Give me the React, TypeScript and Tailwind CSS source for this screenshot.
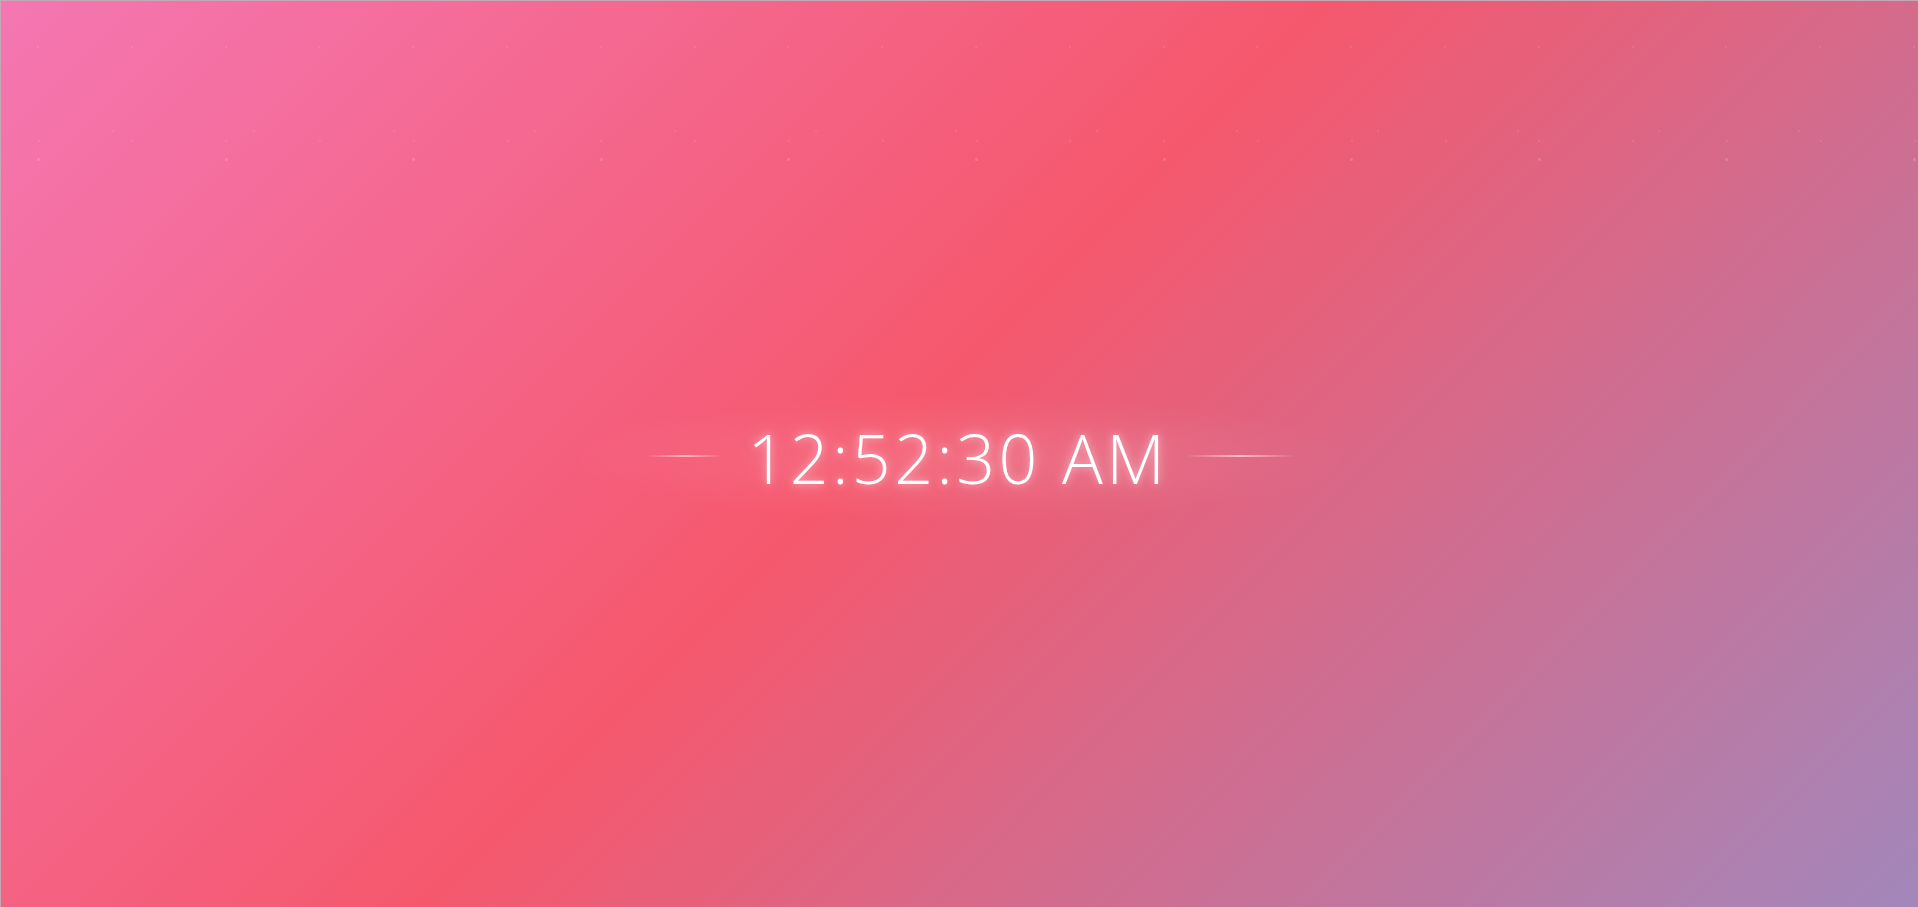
import React from "react";

type Row = { top: number; start: number; step: number; size: number; opacity: number };

const rows: Row[] = [
  { top: 46, start: 37, step: 93.8, size: 2, opacity: 0.12 },
  { top: 130, start: 112, step: 140.5, size: 2, opacity: 0.12 },
  { top: 140, start: 37.5, step: 93.8, size: 2, opacity: 0.13 },
  { top: 158, start: 37.5, step: 187.6, size: 3, opacity: 0.18 },
];

function Particles() {
  const dots: { left: number; top: number; size: number; opacity: number }[] = [];
  rows.forEach((r) => {
    for (let x = r.start; x < 1918; x += r.step) {
      dots.push({ left: x, top: r.top, size: r.size, opacity: r.opacity });
    }
  });
  return (
    <div className="pointer-events-none absolute inset-0">
      {dots.map((d, i) => (
        <span
          key={i}
          className="absolute rounded-full bg-white"
          style={{
            left: d.left - d.size / 2,
            top: d.top - d.size / 2,
            width: d.size,
            height: d.size,
            opacity: d.opacity,
          }}
        />
      ))}
    </div>
  );
}

export default function App() {
  return (
    <div className="relative h-[907px] w-full overflow-hidden border-t border-l border-[#c7a6b6] bg-[linear-gradient(135deg,#f477b2_0%,#f5586d_47%,#a287bb_100%)]">
      <Particles />
      <div className="relative flex h-full w-full items-center justify-center pt-[8px]">
        <div className="flex items-center rounded-full bg-[radial-gradient(ellipse_at_center,rgba(255,255,255,0.11)_0%,rgba(255,255,255,0.04)_45%,transparent_70%)] py-[30px] pr-[60px] pl-[82px]">
          <div className="mr-[25px] mb-[4px] h-[2px] w-[76px] bg-[linear-gradient(to_right,transparent,rgba(255,255,255,0.55),transparent)]" />
          <div
            className="text-[68px] leading-none font-light tracking-[3.5px] text-white [text-shadow:0_0_8px_rgba(255,255,255,0.55),0_0_24px_rgba(255,255,255,0.3)]"
            style={{ fontFamily: '"Open Sans", "Segoe UI", sans-serif' }}
          >
            12:52:30 AM
          </div>
          <div className="mb-[4px] ml-[16px] h-[2px] w-[110px] bg-[linear-gradient(to_right,transparent,rgba(255,255,255,0.6),transparent)]" />
        </div>
      </div>
    </div>
  );
}
